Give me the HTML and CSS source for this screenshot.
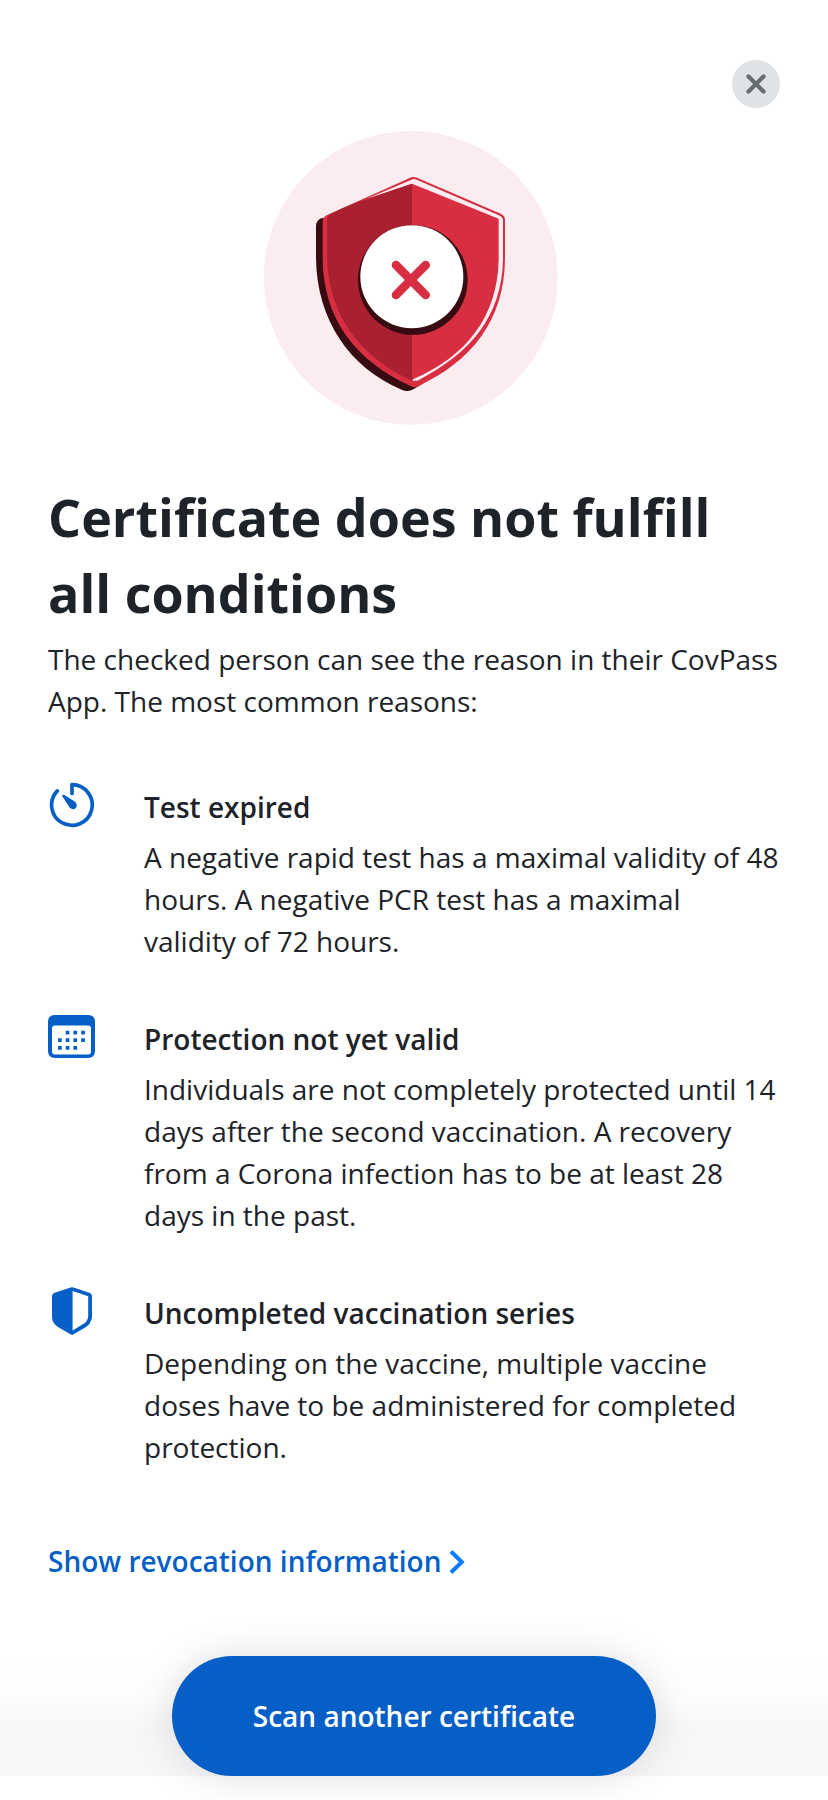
FILE: index.html
```html
<!DOCTYPE html>
<html lang="en">
<head>
<meta charset="utf-8">
<title>CovPass Check</title>
<link rel="stylesheet" href="styles.css">
</head>
<body>
<main class="screen">
  <header class="topbar">
    <button class="close" aria-label="Close">
      <svg width="48" height="48" viewBox="0 0 48 48"><path d="M16.500 16.500 31.500 31.500M31.500 16.500 16.500 31.500" fill="none" stroke="#666e6f" stroke-width="4.200" stroke-linecap="round"/></svg>
    </button>
  </header>

  <svg class="hero" width="320" height="310" viewBox="0 0 960 930">
    <circle cx="482.500" cy="473.500" r="441" fill="#fbecef"/>
    <path d="M222 293 Q199 295 198 318 V415 C200 600 300 745 455 809 Q474 817 490 808 L520 790 L488 760 L320 500 Z" fill="#370b11"/>
    <path d="M484 172 Q492 169 501 173 L754 282 Q765 288 765 300 V415 C764 600 665 724 504 799 Q493 805 482 798 C320 725 219 600 218 415 V305 Q218 292 230 286 Z" fill="#d72e42"/>
    <path d="M488 178 Q494 176 500 179 L750 287 Q759 292 759 302 V415 C757 590 660 700 508 779 Q499 784 488 782 Q487 778 491 777 C650 708 742 590 746 420 V296 L486 191 L350 236 Z" fill="#fbecef"/>
    <path d="M486 191 L355 236 Q300 252 243 281 Q231 286 231 300 V415 C236 585 330 712 486 782 Z" fill="#a92030"/>
    <circle cx="488.500" cy="480" r="164.500" fill="#370b11"/>
    <circle cx="485.500" cy="470" r="154.500" fill="#fff"/>
    <path d="M438 435 527 525M527 435 438 525" fill="none" stroke="#d72e42" stroke-width="26" stroke-linecap="round"/>
  </svg>

  <h1 class="title">Certificate does not fulfill all conditions</h1>
  <p class="intro">The checked person can see the reason in their CovPass App. The most common reasons:</p>

  <ul class="reasons">
    <li class="reason">
      <svg class="icon" width="48" height="48" viewBox="0 0 48 48">
        <path d="M24 12.500V3.700A20.300 20.300 0 1 1 9.300 9.900" fill="none" stroke="#055fc6" stroke-width="3.700" stroke-linejoin="round" stroke-linecap="round"/>
        <path d="M14 14.800Q14.600 13 16.500 14L27 20.800Q29.900 24 28 26.800Q25 30 21.600 26.600Z" fill="#055fc6"/>
      </svg>
      <div class="copy"><h2 class="label">Test expired</h2><p class="text">A negative rapid test has a maximal validity of 48 hours. A negative PCR test has a maximal <br>validity of 72 hours.</p></div>
    </li>
    <li class="reason">
      <svg class="icon" width="48" height="48" viewBox="0 0 48 48">
        <path fill-rule="evenodd" d="M7 2H40Q47 2 47 9V38Q47 45 40 45H7Q0 45 0 38V9Q0 2 7 2ZM7 12.500Q4 12.500 4 15.500V38.500Q4 41.500 7 41.500H40Q43 41.500 43 38.500V15.500Q43 12.500 40 12.500Z" fill="#055fc6"/>
        <path d="M17.700 17.700h3.700v3.700h-3.700zM25.400 17.700h3.700v3.700h-3.700zM33.200 17.700h3.700v3.700h-3.700zM10 25.300h3.700V29H10zM17.700 25.300h3.700V29h-3.700zM25.400 25.300h3.700V29h-3.700zM33.200 25.300h3.700V29h-3.700zM10 33h3.700v3.700H10zM17.700 33h3.700v3.700h-3.700zM25.400 33h3.700v3.700h-3.700z" fill="#055fc6"/>
      </svg>
      <div class="copy"><h2 class="label">Protection not yet valid</h2><p class="text">Individuals are not completely protected until 14 days after the second vaccination. A recovery from a Corona infection has to be at least 28 days in the past.</p></div>
    </li>
    <li class="reason">
      <svg class="icon" width="48" height="48" viewBox="0 0 48 48">
        <path fill-rule="evenodd" d="M22.500.4Q24 0 25.500.4L42 6Q44 7 44 9V30Q43 37 38 40L25.500 47.300Q24 48.300 22.500 47.300L10 40Q4 36 4 30V9Q4 7 6 6ZM24.600 4V43.500L36 36.600Q40 34 40.200 29V9.300Z" fill="#055fc6"/>
      </svg>
      <div class="copy"><h2 class="label">Uncompleted vaccination series</h2><p class="text">Depending on the vaccine, multiple vaccine doses have to be administered for completed protection.</p></div>
    </li>
  </ul>

  <a class="link">Show revocation information<svg class="chevron" width="16" height="24" viewBox="0 0 16 24"><path d="M2 1.500 12.800 12 2 22.500" fill="none" stroke="#0a7cff" stroke-width="4"/></svg></a>

  <footer class="footer"><button class="scan">Scan another certificate</button></footer>
</main>
</body>
</html>
```
FILE: styles.css
```css
* { box-sizing: border-box; }
body { margin: 0; background: #fff; color: #1d2329; font-family: "Open Sans", sans-serif; }
h1, h2, p, ul { margin: 0; padding: 0; }
.screen { display: flex; flex-direction: column; width: 828px; height: 1800px; overflow: hidden; }
.topbar { display: flex; justify-content: flex-end; height: 120px; padding: 60px 48px 12px; }
.close { width: 48px; height: 48px; padding: 0; border: 0; border-radius: 50%; background: #dfe3e6; }
.close svg { display: block; }
.hero { flex: none; margin-left: 250px; }
.title { margin: 49px 48px 0; font-size: 52px; line-height: 76px; font-weight: 700; }
.intro { margin: 7px 48px 0; font-size: 28px; line-height: 42px; }
.reasons { display: flex; flex-direction: column; gap: 51px; margin: 59px 48px 0; list-style: none; }
.reason { display: flex; gap: 48px; }
.icon { flex: none; }
.copy { flex: 1; padding-top: 5px; }
.label { margin-bottom: 8px; font-size: 28px; line-height: 42px; font-weight: 600; }
.text { font-size: 28px; line-height: 42px; }
.link { display: flex; align-items: center; gap: 8px; height: 42px; margin: 72px 48px 0; color: #055fc6; font-size: 28px; line-height: 42px; font-weight: 600; }
.chevron { margin-top: 1px; }
.footer { display: flex; justify-content: center; height: 120px; margin-top: 74px; background: linear-gradient(#fff, #fdfdfd 35%, #f7f7fa 60%, #f7f7fa); }
.scan { width: 484px; height: 120px; padding: 0; border: 0; border-radius: 60px; background: #055fc6; color: #fff; box-shadow: 0 0 40px rgba(0, 0, 0, .13); font: 600 28px/42px "Open Sans", sans-serif; }
```
